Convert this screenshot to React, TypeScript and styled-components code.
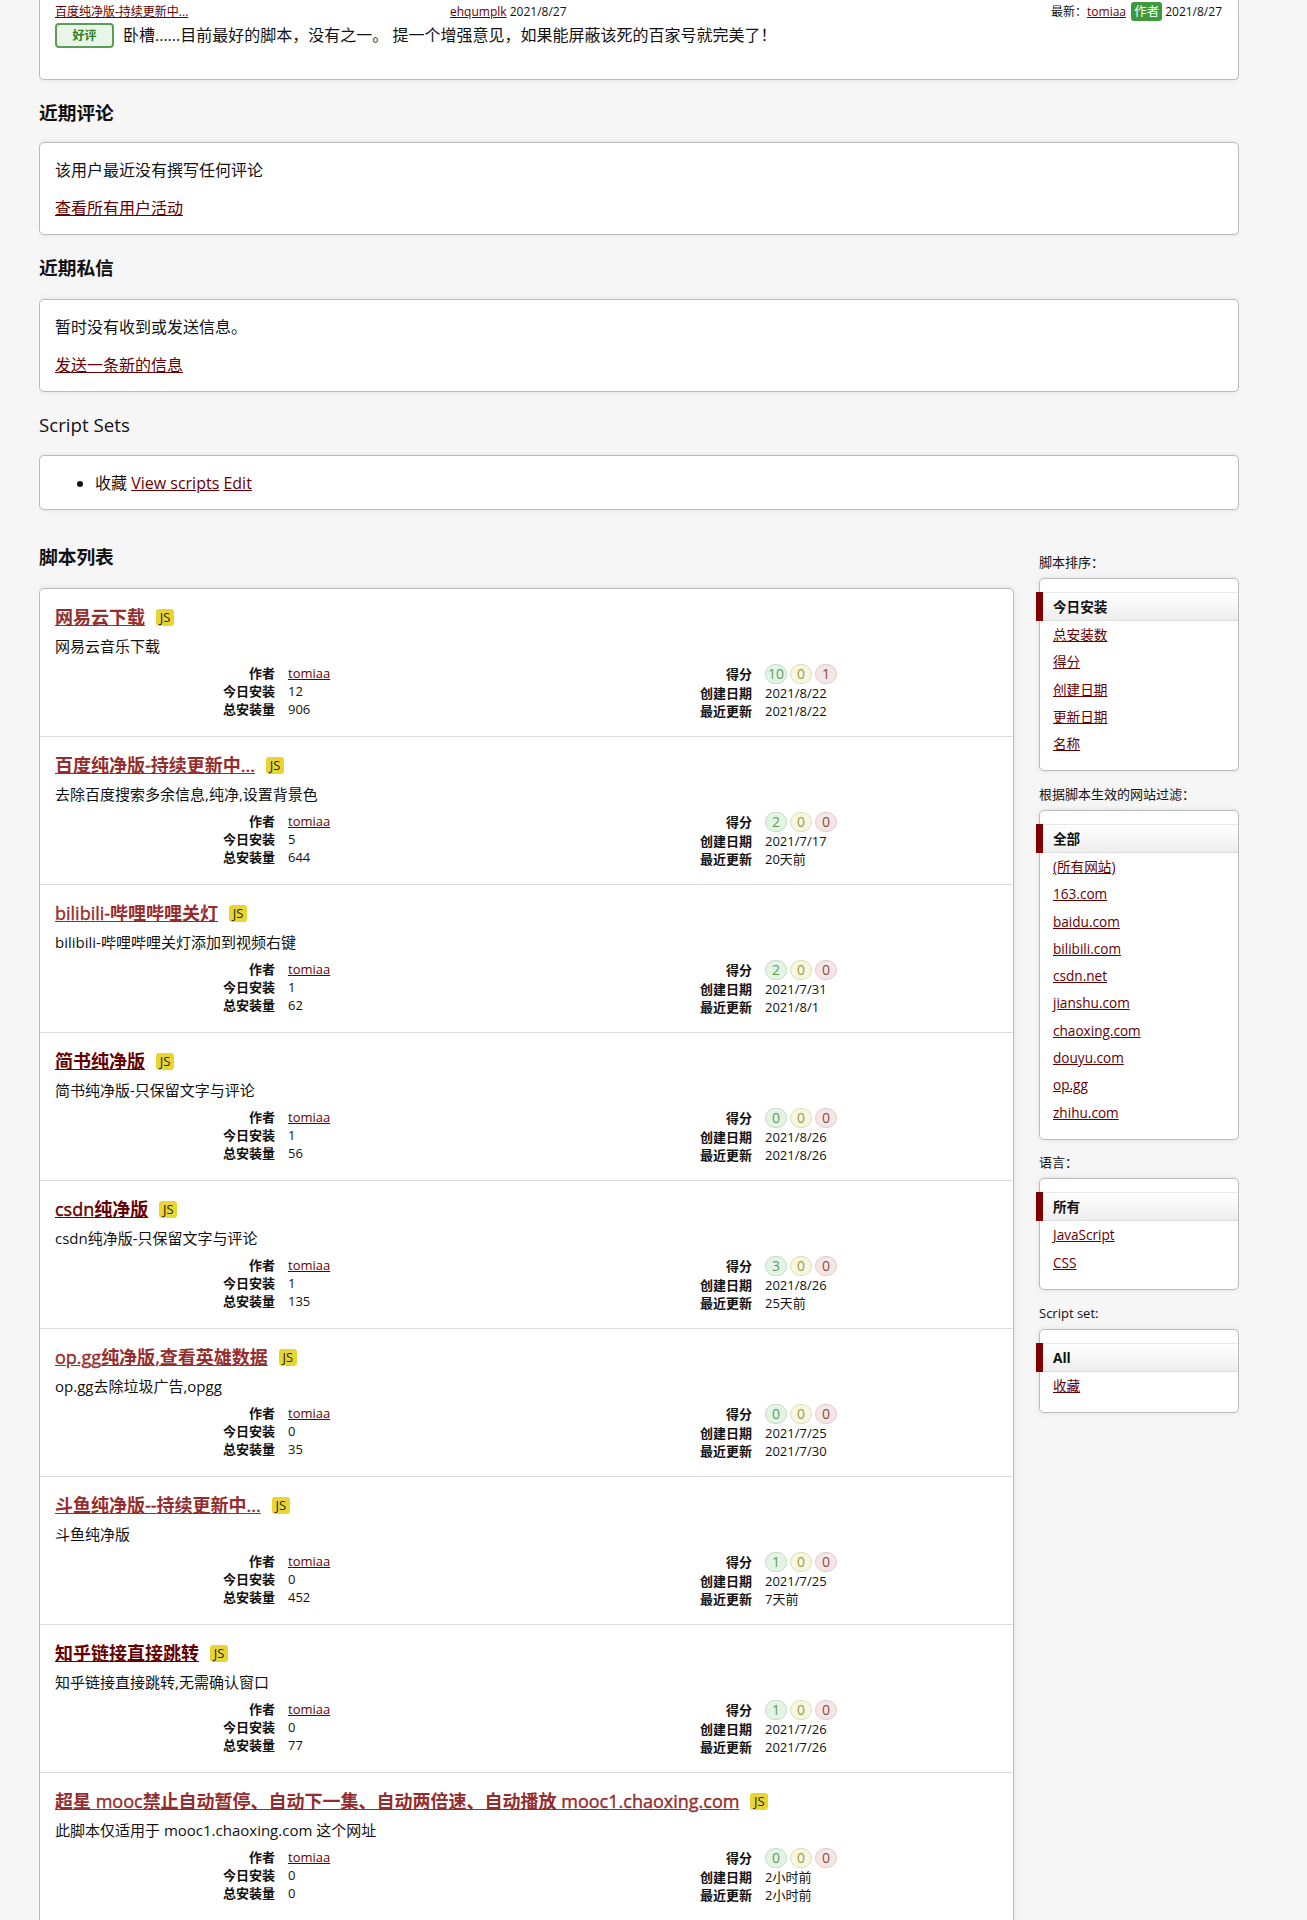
import React from 'react';
import styled, { createGlobalStyle } from 'styled-components';

const Global = createGlobalStyle`
  html, body { margin: 0; padding: 0; background: #f6f6f6; }
  body { font-family: "Open Sans", "Noto Sans CJK SC", sans-serif; font-size: 14px; color: #111; line-height: 1.25; }
  a { color: #670000; }
`;

const Page = styled.div`
  width: 1200px;
  height: 1920px;
  margin-left: 39px;
  overflow: hidden;
`;
const Box = styled.section`
  background: #fff;
  border: 1px solid #bbb;
  border-radius: 5px;
  box-shadow: 0 0 5px #ddd;
  padding: 0 16px 0 15px;
  box-sizing: border-box;
`;
const TopBox = styled(Box)`
  height: 80px;
  border-top: none;
  border-radius: 0 0 5px 5px;
  padding-top: 1px;
`;
const TopMeta = styled.div`
  display: grid;
  grid-template-columns: 395px 1fr auto;
  font-size: 12px;
  line-height: 22px;
`;
const AuthorBadge = styled.span`
  background: #3c9a3c;
  color: #fff;
  border-radius: 3px;
  padding: 1px 3px;
  margin: 0 3px 0 2px;
  font-size: 12.5px;
`;
const ReviewRow = styled.div`
  display: flex;
  align-items: flex-start;
  gap: 9px;
  font-size: 16px;
  line-height: 25px;
`;
const GoodBadge = styled.span`
  width: 59px;
  height: 25px;
  box-sizing: border-box;
  background: #e8f5e8;
  border: 2px solid #5a9e5a;
  border-radius: 4px;
  color: #2e7d1e;
  font-size: 12px;
  line-height: 1;
  font-weight: 700;
  display: flex;
  align-items: center;
  justify-content: center;
`;
const Heading = styled.h2<{ $plain?: boolean }>`
  margin: ${p => (p.$plain ? '20px 0 17px' : '20px 0 18px')};
  font-size: 18.72px;
  line-height: 26px;
  font-weight: ${p => (p.$plain ? 400 : 700)};
  color: #111;
  &:first-of-type { margin: 20px 0 16px; }
`;
const Para = styled.p`
  margin: 0;
  font-size: 16px;
  line-height: 20px;
  padding-top: 17px;
  & + & { padding-top: 18px; padding-bottom: 16px; }
`;
const SetList = styled.ul`
  margin: 0;
  padding: 14px 0 13px 40px;
  font-size: 16px;
  line-height: 26px;
`;
const Columns = styled.div`
  display: flex;
  justify-content: space-between;
  margin-top: 34px;
`;
const Main = styled.div`
  width: 975px;
`;
const ListHeading = styled(Heading)`
  margin: 0 0 18px;
  &:first-of-type { margin: 0 0 18px; }
`;
const ListBox = styled(Box)`
  padding: 0;
  border-radius: 5px 5px 0 0;
`;
const Row = styled.article`
  height: 148px;
  box-sizing: border-box;
  padding: 17px 16px 0 15px;
  border-bottom: 1px solid #ddd;
`;
const TitleLine = styled.div`
  display: flex;
  align-items: center;
  gap: 11px;
  height: 22px;
`;
const Title = styled.a<{ $dark?: boolean }>`
  font-size: 18px;
  font-weight: 700;
  color: ${p => (p.$dark ? '#670000' : '#962d2d')};
`;
const TitleLatin = styled.span`
  font-weight: 400;
  -webkit-text-stroke: 0.4px currentColor;
`;
const Js = styled.span`
  width: 18px;
  height: 17px;
  background: #e8d52f;
  border-radius: 3px;
  font-size: 13px;
  line-height: 17px;
  text-align: center;
  color: #222;
`;
const Desc = styled.div`
  font-size: 15px;
  line-height: 20px;
  margin-top: 8px;
`;
const Stats = styled.div`
  display: grid;
  grid-template-columns: 1fr 1fr;
  margin-top: 7px;
`;
const AuthorStats = styled.dl`
  display: grid;
  grid-template-columns: 220px 1fr;
  grid-auto-rows: 18px;
  column-gap: 13px;
  margin: 0;
  padding-top: 1px;
  font-size: 13px;
  line-height: 18px;
`;
const ScoreStats = styled.dl`
  display: grid;
  grid-template-columns: 226px 1fr;
  grid-template-rows: 21px 18px 18px;
  column-gap: 13px;
  margin: 0;
  font-size: 13px;
  line-height: 18px;
  align-items: center;
`;
const Term = styled.dt`
  font-weight: 700;
  text-align: right;
`;
const Val = styled.dd`
  margin: 0;
  display: flex;
  gap: 3px;
  align-items: center;
`;
const Pill = styled.span<{ $tone: 'good' | 'ok' | 'bad' }>`
  min-width: 22px;
  height: 20px;
  box-sizing: border-box;
  padding: 0 2px;
  border-radius: 10px;
  text-align: center;
  line-height: 18px;
  font-size: 14px;
  ${p =>
    p.$tone === 'good'
      ? 'background:#e4f4e4;border:1px solid #c3dcc3;color:#5e9a5e;'
      : p.$tone === 'ok'
      ? 'background:#f7f7e0;border:1px solid #dedebb;color:#9a9a45;'
      : 'background:#f5e6e6;border:1px solid #e0cccc;color:#8f4a4a;'}
`;
const Side = styled.aside`
  width: 200px;
  padding-top: 10px;
`;
const SideLabel = styled.div`
  font-size: 13px;
  line-height: 16px;
  margin: 0 0 8px;
`;
const SideBox = styled.ul`
  list-style: none;
  margin: 0 0 14.5px;
  padding: 13px 0 13px;
  background: #fff;
  border: 1px solid #bbb;
  border-radius: 5px;
  box-shadow: 0 0 5px #ddd;
  font-size: 13.6px;
`;
const SideItem = styled.li`
  padding-left: 13px;
  line-height: 27.3px;
`;
const SideActive = styled.li`
  position: relative;
  padding-left: 13px;
  height: 27px;
  line-height: 27px;
  font-weight: 700;
  color: #111;
  border-top: 1px solid #e8e8e8;
  border-bottom: 1px solid #ddd;
  background: linear-gradient(#fff, #eee);
  &::before {
    content: '';
    position: absolute;
    left: -4px;
    top: -1px;
    width: 7px;
    height: 29px;
    background: #800000;
  }
`;

type Tone = { g: number; o: number; b: number };
type Script = { t: string; dark?: boolean; d: string; today: number; total: number; s: Tone; c: string; u: string };
const scripts: Script[] = [
  { t: '网易云下载', d: '网易云音乐下载', today: 12, total: 906, s: { g: 10, o: 0, b: 1 }, c: '2021/8/22', u: '2021/8/22' },
  { t: '百度纯净版-持续更新中...', d: '去除百度搜索多余信息,纯净,设置背景色', today: 5, total: 644, s: { g: 2, o: 0, b: 0 }, c: '2021/7/17', u: '20天前' },
  { t: 'bilibili-哔哩哔哩关灯', d: 'bilibili-哔哩哔哩关灯添加到视频右键', today: 1, total: 62, s: { g: 2, o: 0, b: 0 }, c: '2021/7/31', u: '2021/8/1' },
  { t: '简书纯净版', dark: true, d: '简书纯净版-只保留文字与评论', today: 1, total: 56, s: { g: 0, o: 0, b: 0 }, c: '2021/8/26', u: '2021/8/26' },
  { t: 'csdn纯净版', dark: true, d: 'csdn纯净版-只保留文字与评论', today: 1, total: 135, s: { g: 3, o: 0, b: 0 }, c: '2021/8/26', u: '25天前' },
  { t: 'op.gg纯净版,查看英雄数据', d: 'op.gg去除垃圾广告,opgg', today: 0, total: 35, s: { g: 0, o: 0, b: 0 }, c: '2021/7/25', u: '2021/7/30' },
  { t: '斗鱼纯净版--持续更新中...', d: '斗鱼纯净版', today: 0, total: 452, s: { g: 1, o: 0, b: 0 }, c: '2021/7/25', u: '7天前' },
  { t: '知乎链接直接跳转', dark: true, d: '知乎链接直接跳转,无需确认窗口', today: 0, total: 77, s: { g: 1, o: 0, b: 0 }, c: '2021/7/26', u: '2021/7/26' },
  { t: '超星 mooc禁止自动暂停、自动下一集、自动两倍速、自动播放 mooc1.chaoxing.com', d: '此脚本仅适用于 mooc1.chaoxing.com 这个网址', today: 0, total: 0, s: { g: 0, o: 0, b: 0 }, c: '2小时前', u: '2小时前' },
];

const sideGroups: { label: string; active: string; items: string[] }[] = [
  { label: '脚本排序：', active: '今日安装', items: ['总安装数', '得分', '创建日期', '更新日期', '名称'] },
  { label: '根据脚本生效的网站过滤：', active: '全部', items: ['(所有网站)', '163.com', 'baidu.com', 'bilibili.com', 'csdn.net', 'jianshu.com', 'chaoxing.com', 'douyu.com', 'op.gg', 'zhihu.com'] },
  { label: '语言：', active: '所有', items: ['JavaScript', 'CSS'] },
  { label: 'Script set:', active: 'All', items: ['收藏'] },
];

const titleParts = (t: string) =>
  t.split(/([\x00-\x7f]+)/).filter(Boolean).map((part, i) =>
    /^[\x00-\x7f]+$/.test(part) ? <TitleLatin key={i}>{part}</TitleLatin> : part
  );

export default function App() {
  return (
    <Page>
      <Global />
      <TopBox>
        <TopMeta>
          <span><a href="#">百度纯净版-持续更新中...</a></span>
          <span><a href="#">ehqumplk</a> 2021/8/27</span>
          <span>最新：<a href="#">tomiaa</a> <AuthorBadge>作者</AuthorBadge>2021/8/27</span>
        </TopMeta>
        <ReviewRow>
          <GoodBadge>好评</GoodBadge>
          <span>卧槽......目前最好的脚本，没有之一。 提一个增强意见，如果能屏蔽该死的百家号就完美了！</span>
        </ReviewRow>
      </TopBox>
      <Heading>近期评论</Heading>
      <Box>
        <Para>该用户最近没有撰写任何评论</Para>
        <Para><a href="#">查看所有用户活动</a></Para>
      </Box>
      <Heading>近期私信</Heading>
      <Box>
        <Para>暂时没有收到或发送信息。</Para>
        <Para><a href="#">发送一条新的信息</a></Para>
      </Box>
      <Heading $plain>Script Sets</Heading>
      <Box>
        <SetList><li>收藏 <a href="#">View scripts</a> <a href="#">Edit</a></li></SetList>
      </Box>
      <Columns>
        <Main>
          <ListHeading>脚本列表</ListHeading>
          <ListBox>
            {scripts.map(s => (
              <Row key={s.t}>
                <TitleLine>
                  <Title href="#" $dark={s.dark}>{titleParts(s.t)}</Title>
                  <Js>JS</Js>
                </TitleLine>
                <Desc>{s.d}</Desc>
                <Stats>
                  <AuthorStats>
                    <Term>作者</Term><Val><a href="#">tomiaa</a></Val>
                    <Term>今日安装</Term><Val>{s.today}</Val>
                    <Term>总安装量</Term><Val>{s.total}</Val>
                  </AuthorStats>
                  <ScoreStats>
                    <Term>得分</Term>
                    <Val>
                      <Pill $tone="good">{s.s.g}</Pill>
                      <Pill $tone="ok">{s.s.o}</Pill>
                      <Pill $tone="bad">{s.s.b}</Pill>
                    </Val>
                    <Term>创建日期</Term><Val>{s.c}</Val>
                    <Term>最近更新</Term><Val>{s.u}</Val>
                  </ScoreStats>
                </Stats>
              </Row>
            ))}
          </ListBox>
        </Main>
        <Side>
          {sideGroups.map(g => (
            <React.Fragment key={g.label}>
              <SideLabel>{g.label}</SideLabel>
              <SideBox>
                <SideActive>{g.active}</SideActive>
                {g.items.map(i => (
                  <SideItem key={i}><a href="#">{i}</a></SideItem>
                ))}
              </SideBox>
            </React.Fragment>
          ))}
        </Side>
      </Columns>
    </Page>
  );
}
